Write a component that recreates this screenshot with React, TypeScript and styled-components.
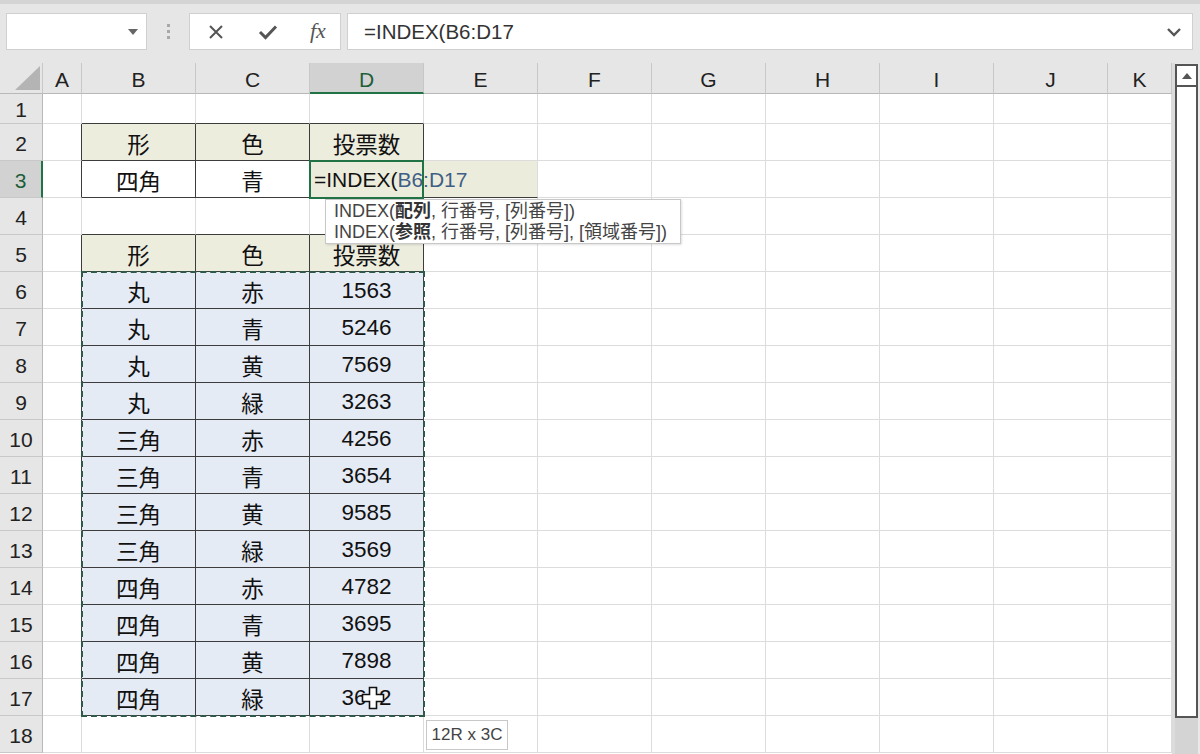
import React from "react";
import styled, { createGlobalStyle } from "styled-components";

const GlobalStyle = createGlobalStyle`
	html, body {
		margin: 0;
		padding: 0;
		background: #fff;
	}
	body {
		font-family: "Liberation Sans", "Noto Sans CJK JP", sans-serif;
	}
`;

const COLS = ["A", "B", "C", "D", "E", "F", "G", "H", "I", "J", "K"];
const TABLE_ROWS = [2, 3, 5, 6, 7, 8, 9, 10, 11, 12, 13, 14, 15, 16, 17];
const HEAD_ROWS = [2, 5];

const DATA: Record<number, string[]> = {
	2: ["形", "色", "投票数"],
	3: ["四角", "青", ""],
	5: ["形", "色", "投票数"],
	6: ["丸", "赤", "1563"],
	7: ["丸", "青", "5246"],
	8: ["丸", "黄", "7569"],
	9: ["丸", "緑", "3263"],
	10: ["三角", "赤", "4256"],
	11: ["三角", "青", "3654"],
	12: ["三角", "黄", "9585"],
	13: ["三角", "緑", "3569"],
	14: ["四角", "赤", "4782"],
	15: ["四角", "青", "3695"],
	16: ["四角", "黄", "7898"],
	17: ["四角", "緑", "3642"],
};

const inTable = (r: number, c: number) => TABLE_ROWS.includes(r) && c >= 1 && c <= 3;

type Fill = "none" | "head" | "data";

// grid line numbers: column 1 is the row header, row 1 is the column header
const gCol = (ci: number) => ci + 2;
const gRow = (r: number) => r + 1;

function App() {
	const rows = Array.from({ length: 18 }, (_, i) => i + 1);

	return (
		<Page>
			<GlobalStyle />
			<TopStrip />
			<FormulaRow>
				<NameBox>
					<DropArrow viewBox="0 0 10 6">
						<path d="M0 0 L10 0 L5 6 Z" fill="#666" />
					</DropArrow>
				</NameBox>
				<Grip>
					<span />
					<span />
					<span />
				</Grip>
				<ButtonsBox>
					<IconSlot>
						<svg width="18" height="18" viewBox="0 0 18 18">
							<path d="M3 3 L15 15 M15 3 L3 15" stroke="#555" strokeWidth="2" fill="none" />
						</svg>
					</IconSlot>
					<IconSlot>
						<svg width="20" height="18" viewBox="0 0 20 18">
							<path d="M2 9 L7.5 14.5 L18 3.5" stroke="#555" strokeWidth="3" fill="none" />
						</svg>
					</IconSlot>
					<FxLabel>fx</FxLabel>
				</ButtonsBox>
				<FormulaInput>
					<FormulaText>=INDEX(B6:D17</FormulaText>
					<svg width="16" height="10" viewBox="0 0 16 10">
						<path d="M2 2 L8 8 L14 2" stroke="#555" strokeWidth="2.4" fill="none" />
					</svg>
				</FormulaInput>
			</FormulaRow>

			<SheetArea>
				<GridWrap>
					<SheetGrid>
						<Corner>
							<svg width="28" height="26" viewBox="0 0 28 26">
								<path d="M27 1 L27 25 L2 25 Z" fill="#b4b4b4" />
							</svg>
						</Corner>
						{COLS.map((c) => (
							<ColHead key={c} $active={c === "D"}>
								{c}
							</ColHead>
						))}
						{rows.map((r) => (
							<React.Fragment key={r}>
								<RowHead $row={gRow(r)} $active={r === 3}>
									{r}
								</RowHead>
								{COLS.map((col, ci) => {
									if (r === 3 && ci === 4) return null;
									const rightDark = inTable(r, ci) || inTable(r, ci + 1);
									const bottomDark = inTable(r, ci) || inTable(r + 1, ci);
									let fill: Fill = "none";
									if (inTable(r, ci)) fill = HEAD_ROWS.includes(r) ? "head" : r === 3 ? "none" : "data";
									if (r === 3 && ci === 3) {
										return (
											<EditCell key={col} $row={gRow(r)} $col={gCol(ci)} $bottomDark={bottomDark}>
												=INDEX(<RefText>B6:D17</RefText>
											</EditCell>
										);
									}
									const text = inTable(r, ci) ? DATA[r][ci - 1] : "";
									return (
										<Cell
											key={col}
											$row={gRow(r)}
											$col={gCol(ci)}
											$fill={fill}
											$rightDark={rightDark}
											$bottomDark={bottomDark}
										>
											{text}
										</Cell>
									);
								})}
							</React.Fragment>
						))}
						<ActiveBox />
						<MarchingAnts />
					</SheetGrid>

					<FuncTip>
						<div>
							INDEX(<b>配列</b>, 行番号, [列番号])
						</div>
						<div>
							INDEX(<b>参照</b>, 行番号, [列番号], [領域番号])
						</div>
					</FuncTip>
					<SizeTip>12R x 3C</SizeTip>
					<Cursor viewBox="0 0 24 24">
						<path
							d="M8.5 1.5 H15.5 V8.5 H22.5 V15.5 H15.5 V22.5 H8.5 V15.5 H1.5 V8.5 H8.5 Z"
							fill="#fff"
							stroke="#111"
							strokeWidth="1.6"
						/>
					</Cursor>
				</GridWrap>

				<ScrollBar>
					<ScrollUp>
						<svg width="10" height="6" viewBox="0 0 10 6">
							<path d="M0 6 L5 0 L10 6 Z" fill="#555" />
						</svg>
					</ScrollUp>
					<ScrollThumb />
					<ScrollRest />
				</ScrollBar>
			</SheetArea>
		</Page>
	);
}

export default App;

const Page = styled.div`
	width: 1200px;
	height: 754px;
	overflow: hidden;
	display: flex;
	flex-direction: column;
	background: #e6e6e6;
`;

const TopStrip = styled.div`
	flex-shrink: 0;
	height: 4px;
	background: #d4d4d4;
`;

const FormulaRow = styled.div`
	flex-shrink: 0;
	height: 59px;
	display: flex;
	align-items: flex-start;
	padding: 9px 7px 0 6px;
	box-sizing: border-box;
`;

const Box = styled.div`
	height: 37px;
	box-sizing: border-box;
	background: #fff;
	border: 1px solid #d0d0d0;
	display: flex;
	align-items: center;
`;

const NameBox = styled(Box)`
	width: 141px;
	flex-shrink: 0;
	justify-content: flex-end;
	padding-right: 8px;
`;

const DropArrow = styled.svg`
	width: 10px;
	height: 6px;
`;

const Grip = styled.div`
	width: 42px;
	flex-shrink: 0;
	height: 37px;
	display: flex;
	flex-direction: column;
	align-items: center;
	justify-content: center;
	gap: 3px;
	span {
		width: 3px;
		height: 3px;
		background: #a8a8a8;
	}
`;

const ButtonsBox = styled(Box)`
	width: 152px;
	flex-shrink: 0;
	margin-right: 6px;
	padding-left: 16px;
`;

const IconSlot = styled.div`
	width: 50px;
	display: flex;
	align-items: center;
	justify-content: flex-start;
	padding-left: 1px;
`;

const FxLabel = styled.span`
	font-family: "Liberation Serif", "DejaVu Serif", serif;
	font-style: italic;
	font-size: 22px;
	color: #555;
	padding-left: 2px;
	margin-top: -2px;
`;

const FormulaInput = styled(Box)`
	flex: 1;
	justify-content: space-between;
	padding: 0 10px 0 16px;
`;

const FormulaText = styled.span`
	font-family: "Liberation Sans", sans-serif;
	font-size: 20.5px;
	color: #333;
`;

const SheetArea = styled.div`
	flex: 1;
	min-height: 0;
	display: flex;
	background: #fff;
`;

const GridWrap = styled.div`
	position: relative;
	width: 1172px;
	overflow: hidden;
`;

const SheetGrid = styled.div`
	display: grid;
	grid-template-columns: 43px 39px repeat(9, 114px) 64px;
	grid-template-rows: 31px 30px repeat(17, 37px);
	font-family: "Liberation Sans", "Noto Sans CJK JP", sans-serif;
`;

const Corner = styled.div`
	grid-row: 1;
	grid-column: 1;
	background: #e6e6e6;
	border-right: 1px solid #c8c8c8;
	border-bottom: 1px solid #b8b8b8;
	box-sizing: border-box;
	display: flex;
	align-items: flex-end;
	justify-content: flex-end;
	padding: 0 1px 2px 0;
`;

const ColHead = styled.div<{ $active?: boolean }>`
	grid-row: 1;
	background: ${({ $active }) => ($active ? "#d2d2d2" : "#e6e6e6")};
	color: ${({ $active }) => ($active ? "#1e5e3a" : "#222")};
	border-right: 1px solid #c8c8c8;
	border-bottom: ${({ $active }) => ($active ? "2px solid #217346" : "1px solid #b8b8b8")};
	box-sizing: border-box;
	display: flex;
	align-items: center;
	justify-content: center;
	font-size: 21px;
	padding-top: 4px;
`;

const RowHead = styled.div<{ $row: number; $active?: boolean }>`
	grid-row: ${({ $row }) => $row};
	grid-column: 1;
	background: ${({ $active }) => ($active ? "#d2d2d2" : "#e6e6e6")};
	color: ${({ $active }) => ($active ? "#1e5e3a" : "#222")};
	border-right: ${({ $active }) => ($active ? "2px solid #217346" : "1px solid #b8b8b8")};
	border-bottom: 1px solid #c8c8c8;
	box-sizing: border-box;
	display: flex;
	align-items: center;
	justify-content: center;
	font-size: 21px;
	padding-top: 3px;
`;

const fills: Record<Fill, string> = {
	none: "#fff",
	head: "#ededde",
	data: "#e5ebf5",
};

const Cell = styled.div<{ $row: number; $col: number; $fill: Fill; $rightDark: boolean; $bottomDark: boolean }>`
	grid-row: ${({ $row }) => $row};
	grid-column: ${({ $col }) => $col};
	background: ${({ $fill }) => fills[$fill]};
	border-right: 1px solid ${({ $rightDark }) => ($rightDark ? "#3c3c3c" : "#dcdcdc")};
	border-bottom: 1px solid ${({ $bottomDark }) => ($bottomDark ? "#3c3c3c" : "#dcdcdc")};
	box-sizing: border-box;
	display: flex;
	align-items: center;
	justify-content: center;
	font-size: 22.5px;
	color: #111;
	padding-top: 2px;
`;

const EditCell = styled.div<{ $row: number; $col: number; $bottomDark: boolean }>`
	grid-row: ${({ $row }) => $row};
	grid-column: ${({ $col }) => `${$col} / span 2`};
	background: #ececdc;
	border-right: 1px solid #dcdcdc;
	border-bottom: 1px solid ${({ $bottomDark }) => ($bottomDark ? "#3c3c3c" : "#dcdcdc")};
	box-sizing: border-box;
	display: flex;
	align-items: center;
	padding: 2px 0 0 4px;
	font-size: 21px;
	color: #111;
	white-space: nowrap;
`;

const RefText = styled.span`
	color: #3e5f86;
`;

const ActiveBox = styled.div`
	grid-column: 5;
	grid-row: 4;
	margin: -1px 0 -1px -1px;
	border: 2px solid #217346;
	pointer-events: none;
	z-index: 2;
`;

const MarchingAnts = styled.div`
	grid-column: 3 / 6;
	grid-row: 7 / 19;
	margin: -1px -1px -1px -1px;
	border: 2px dashed #2f5a4a;
	pointer-events: none;
	z-index: 2;
`;

const FuncTip = styled.div`
	position: absolute;
	left: 325px;
	top: 136px;
	width: 356px;
	height: 45px;
	box-sizing: border-box;
	background: #fff;
	border: 1px solid #c8c8c8;
	box-shadow: 1px 1px 2px rgba(0, 0, 0, 0.12);
	padding: 1px 0 0 8px;
	font-size: 18px;
	line-height: 21px;
	color: #444;
	white-space: nowrap;
	z-index: 3;
	b {
		color: #333;
	}
`;

const SizeTip = styled.div`
	position: absolute;
	left: 426px;
	top: 657px;
	width: 82px;
	height: 30px;
	box-sizing: border-box;
	background: #fff;
	border: 1px solid #c8c8c8;
	display: flex;
	align-items: center;
	justify-content: center;
	font-size: 17px;
	color: #444;
	z-index: 3;
`;

const Cursor = styled.svg`
	position: absolute;
	left: 361px;
	top: 623px;
	width: 24px;
	height: 24px;
	z-index: 4;
`;

const ScrollBar = styled.div`
	width: 28px;
	display: flex;
	flex-direction: column;
	background: #e9e9e9;
	border-left: 3px solid #dcdcdc;
	box-sizing: border-box;
	padding: 1px 2px 0 0;
`;

const ScrollUp = styled.div`
	flex-shrink: 0;
	height: 23px;
	border: 2px solid #555;
	background: #fff;
	box-sizing: border-box;
	display: flex;
	align-items: center;
	justify-content: center;
`;

const ScrollThumb = styled.div`
	flex-shrink: 0;
	height: 631px;
	border: 2px solid #555;
	border-top: none;
	background: #fff;
	box-sizing: border-box;
`;

const ScrollRest = styled.div`
	flex: 1;
	background: #d4d4d4;
`;
